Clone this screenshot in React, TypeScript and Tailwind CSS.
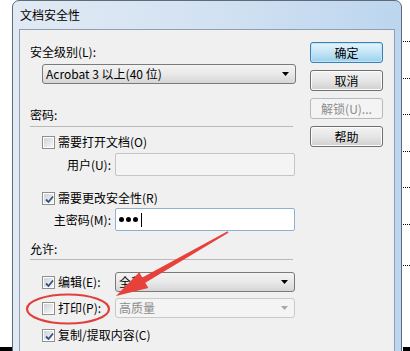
import type { ReactNode } from 'react'

function Check({ checked }: { checked?: boolean }) {
  return (
    <span className="relative flex h-[13px] w-[13px] shrink-0 items-center justify-center border border-[#8e8f8f] bg-white">
      <span className="h-[9px] w-[9px] bg-gradient-to-br from-[#cfd3d9] to-[#f7f7f7]" />
      {checked && (
        <svg className="absolute left-[1px] top-[1px]" width="11" height="11" viewBox="0 0 11 11">
          <path d="M2 5.5 L4.5 8 L9 2.5" fill="none" stroke="#33507f" strokeWidth="1.8" />
        </svg>
      )}
    </span>
  )
}

function Arrow({ disabled }: { disabled?: boolean }) {
  return (
    <svg width="7" height="4" viewBox="0 0 7 4" className="shrink-0">
      <path d="M0 0 H7 L3.5 4 Z" fill={disabled ? '#a8a8a8' : '#000'} />
    </svg>
  )
}

function Select({ text, disabled, className }: { text: string; disabled?: boolean; className: string }) {
  return (
    <div
      className={`flex h-[20px] items-center justify-between rounded-[3px] border pl-[3px] pr-[6px] ${
        disabled
          ? 'border-[#c9c9c9] bg-[#f4f4f4] text-[#8d8d8d]'
          : 'border-[#7a7a7a] bg-gradient-to-b from-[#f3f3f3] via-[#e9e9e9] to-[#d6d6d6]'
      } ${className}`}
    >
      <span>{text}</span>
      <Arrow disabled={disabled} />
    </div>
  )
}

function Button({ children, kind }: { children: ReactNode; kind?: 'default' | 'disabled' }) {
  const style =
    kind === 'default'
      ? 'border-[#3c7fb1] bg-gradient-to-b from-[#e5f4fc] via-[#c4e5f6] to-[#98d1ef] shadow-[inset_0_0_0_1px_#bfe6f8]'
      : kind === 'disabled'
        ? 'border-[#b5b9bc] bg-[#f4f4f4] text-[#8c8c8c]'
        : 'border-[#707070] bg-gradient-to-b from-[#f2f2f2] via-[#e6e6e6] to-[#cfcfcf] shadow-[inset_0_0_0_1px_#fcfcfc]'
  return (
    <div className={`flex h-[21px] w-[73px] items-center justify-center rounded-[3px] border ${style}`}>
      {children}
    </div>
  )
}

export default function App() {
  return (
    <div className="relative flex h-[351px] w-[410px] overflow-hidden bg-white font-['Noto_Sans_CJK_SC','Noto_Sans',sans-serif] text-[12px] leading-4 text-black">
      {/* left of window */}
      <div className="flex w-[12px] flex-col justify-end">
        <div className="h-[4px] bg-black" />
      </div>

      {/* window */}
      <div className="flex h-[370px] w-[390px] shrink-0 flex-col rounded-t-[7px] border border-[#5f6b78] bg-gradient-to-r from-[#e1eaf4] via-[#d3e2f2] to-[#bcd6ef]">
        <div className="flex h-[28px] items-center pl-[7px]">文档安全性</div>
        <div className="flex-1 px-[6px]">
          <div className="flex h-full border border-[#8e9fb3] bg-[#f0f0f0]">
            {/* left column */}
            <div className="flex w-[276px] flex-col pl-[10px]">
              <div className="mt-[14px] h-[16px]">安全级别(L):</div>
              <Select text="Acrobat 3 以上(40 位)" className="ml-[12px] mt-[4px] w-[254px]" />

              <div className="mt-[23px] h-[16px]">密码:</div>
              <div className="mt-[3px] h-px w-[263px] bg-[#b9b9b9]" />

              <div className="mt-[7px] flex h-[16px] items-center gap-[3px] pl-[12px]">
                <Check />
                <span>需要打开文档(O)</span>
              </div>
              <div className="mt-[3px] flex items-center">
                <span className="w-[81px] text-right">用户(U):</span>
                <div className="ml-[4px] h-[23px] w-[180px] rounded-[2px] border border-[#c5c5c5] bg-[#f4f4f4]" />
              </div>

              <div className="mt-[14px] flex h-[16px] items-center gap-[3px] pl-[12px]">
                <Check checked />
                <span>需要更改安全性(R)</span>
              </div>
              <div className="mt-[2px] flex items-center">
                <span className="w-[81px] text-right">主密码(M):</span>
                <div className="ml-[4px] flex h-[23px] w-[180px] items-center gap-[2px] rounded-[2px] border border-[#8fb1d3] bg-white pl-[3px]">
                  <span className="h-[5px] w-[5px] rounded-full bg-black" />
                  <span className="h-[5px] w-[5px] rounded-full bg-black" />
                  <span className="h-[5px] w-[5px] rounded-full bg-black" />
                  <span className="ml-[1px] h-[14px] w-px bg-black" />
                </div>
              </div>

              <div className="mt-[10px] h-[16px]">允许:</div>
              <div className="mt-[2px] h-px w-[263px] bg-[#b9b9b9]" />

              <div className="mt-[12px] flex items-center pl-[12px]">
                <Check checked />
                <span className="ml-[3px] w-[57px]">编辑(E):</span>
                <Select text="全部" className="w-[180px]" />
              </div>
              <div className="mt-[6px] flex items-center pl-[12px]">
                <Check />
                <span className="ml-[3px] w-[57px]">打印(P):</span>
                <Select text="高质量" disabled className="w-[180px]" />
              </div>
              <div className="mt-[9px] flex h-[16px] items-center gap-[3px] pl-[12px]">
                <Check checked />
                <span>复制/提取内容(C)</span>
              </div>
            </div>

            {/* buttons */}
            <div className="ml-[14px] mt-[12px] flex flex-col gap-[7px]">
              <Button kind="default">确定</Button>
              <Button>取消</Button>
              <Button kind="disabled">解锁(U)...</Button>
              <Button>帮助</Button>
            </div>
          </div>
        </div>
      </div>

      {/* right of window: document behind */}
      <div className="flex w-[8px] flex-col pl-[1px]">
        <div className="mt-[41px] h-px border-t border-dotted border-black" />
        <div className="mt-[36px] h-px border-t border-dotted border-black" />
        <div className="mt-[35px] h-px border-t border-dotted border-black" />
        <div className="mt-[36px] h-px border-t border-dotted border-black" />
        <div className="mt-[35px] h-px border-t border-dotted border-black" />
        <div className="mt-[36px] h-px border-t border-dotted border-black" />
        <div className="mt-[40px] h-px border-t border-dotted border-black" />
        <div className="mt-auto h-[4px] bg-black" />
      </div>

      {/* red annotation */}
      <svg className="pointer-events-none absolute inset-0" width="410" height="351" viewBox="0 0 410 351">
        <ellipse cx="68" cy="309" rx="41" ry="14.5" fill="none" stroke="#e0403c" strokeWidth="2.2" />
        <polygon
          points="116,296 139.3,272.3 142.3,277.5 227.6,231.3 228.4,232.7 145.3,282.7 148.3,287.9"
          fill="#e8413c"
        />
      </svg>
    </div>
  )
}
